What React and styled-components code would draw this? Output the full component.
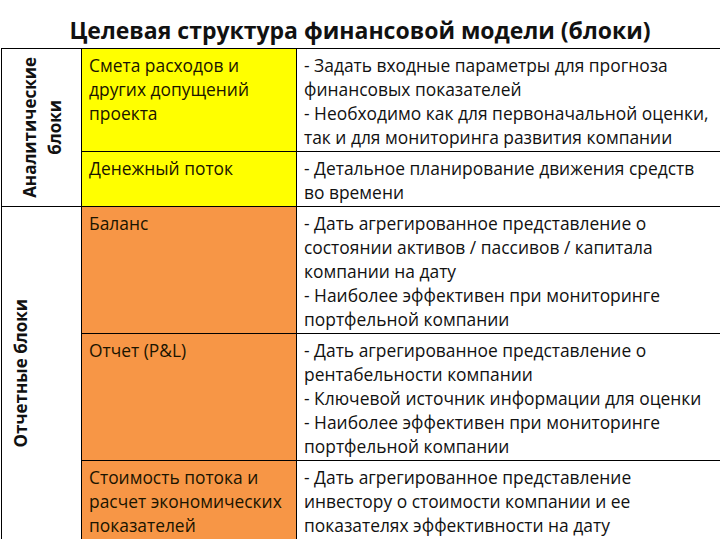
import React from 'react'
import styled, { createGlobalStyle } from 'styled-components'

const GlobalStyle = createGlobalStyle`
    html, body {
        margin: 0;
        padding: 0;
        background: #ffffff;
    }
    body {
        font-family: 'Open Sans', 'Noto Sans', sans-serif;
        color: #000;
    }
`

const Page = styled.div`
    width: 720px;
    height: 540px;
    overflow: hidden;
    background: #fff;
    display: flex;
    flex-direction: column;
`

const Title = styled.h1`
    flex-shrink: 0;
    margin: 0;
    height: 48px;
    display: flex;
    align-items: center;
    justify-content: center;
    padding-top: 12px;
    box-sizing: border-box;
    font-size: 23px;
    font-weight: 700;
    color: #111;
    white-space: nowrap;
`

const Table = styled.div`
    flex-shrink: 0;
    display: grid;
    grid-template-columns: 80px 215px 1fr;
    margin-left: 1px;
    border-left: 1px solid #000;
`

const Group = styled.div`
    grid-row: ${p => p.$rows};
    grid-column: 1;
    border-top: 1px solid #000;
    border-right: 1px solid #000;
    display: flex;
    justify-content: ${p => (p.$center ? 'center' : 'flex-start')};
    align-items: center;
    padding: ${p => p.$pad || '0'};
`

const Rotated = styled.div`
    writing-mode: vertical-rl;
    transform: rotate(180deg);
    font-size: 17px;
    font-weight: 700;
    line-height: 25px;
    text-align: center;
    white-space: nowrap;
    color: #111;
`

const Name = styled.div`
    grid-column: 2;
    background: ${p => p.$bg};
    border-top: 1px solid #000;
    border-right: 1px solid #000;
    padding: 4px 6px 2px 7px;
    font-size: 17.4px;
    line-height: 24px;
    color: #1a1400;
`

const Desc = styled.div`
    grid-column: 3;
    border-top: 1px solid #000;
    padding: 4px 6px 2px 7px;
    font-size: 17.4px;
    line-height: 24px;
    color: #111;
`

const Line = styled.div`
    white-space: nowrap;
`

const YELLOW = '#ffff00'
const ORANGE = '#f79646'

const rows = [
    {
        bg: YELLOW,
        name: ['Смета расходов и', 'других допущений', 'проекта'],
        desc: [
            '- Задать входные параметры для прогноза',
            'финансовых показателей',
            '- Необходимо как для первоначальной оценки,',
            'так и для мониторинга развития компании',
        ],
    },
    {
        bg: YELLOW,
        name: ['Денежный поток'],
        desc: ['- Детальное планирование движения средств', 'во времени'],
    },
    {
        bg: ORANGE,
        name: ['Баланс'],
        desc: [
            '- Дать агрегированное представление о',
            'состоянии активов / пассивов / капитала',
            'компании на дату',
            '- Наиболее эффективен при мониторинге',
            'портфельной компании',
        ],
    },
    {
        bg: ORANGE,
        name: ['Отчет (P&L)'],
        desc: [
            '- Дать агрегированное представление о',
            'рентабельности компании',
            '- Ключевой источник информации для оценки',
            '- Наиболее эффективен при мониторинге',
            'портфельной компании',
        ],
    },
    {
        bg: ORANGE,
        name: ['Стоимость потока и', 'расчет экономических', 'показателей'],
        desc: [
            '- Дать агрегированное представление',
            'инвестору о стоимости компании и ее',
            'показателях эффективности на дату',
        ],
    },
]

export default function App() {
    return (
        <Page>
            <GlobalStyle />
            <Title>Целевая структура финансовой модели (блоки)</Title>
            <Table>
                <Group $rows="1 / span 2" $center>
                    <Rotated>Аналитические<br />блоки</Rotated>
                </Group>
                <Group $rows="3 / span 3" $pad="0 0 0 6px">
                    <Rotated>Отчетные блоки</Rotated>
                </Group>
                {rows.map((r, i) => (
                    <React.Fragment key={i}>
                        <Name $bg={r.bg} style={{ gridRow: i + 1 }}>
                            {r.name.map((l, j) => <Line key={j}>{l}</Line>)}
                        </Name>
                        <Desc style={{ gridRow: i + 1 }}>
                            {r.desc.map((l, j) => <Line key={j}>{l}</Line>)}
                        </Desc>
                    </React.Fragment>
                ))}
            </Table>
        </Page>
    )
}
